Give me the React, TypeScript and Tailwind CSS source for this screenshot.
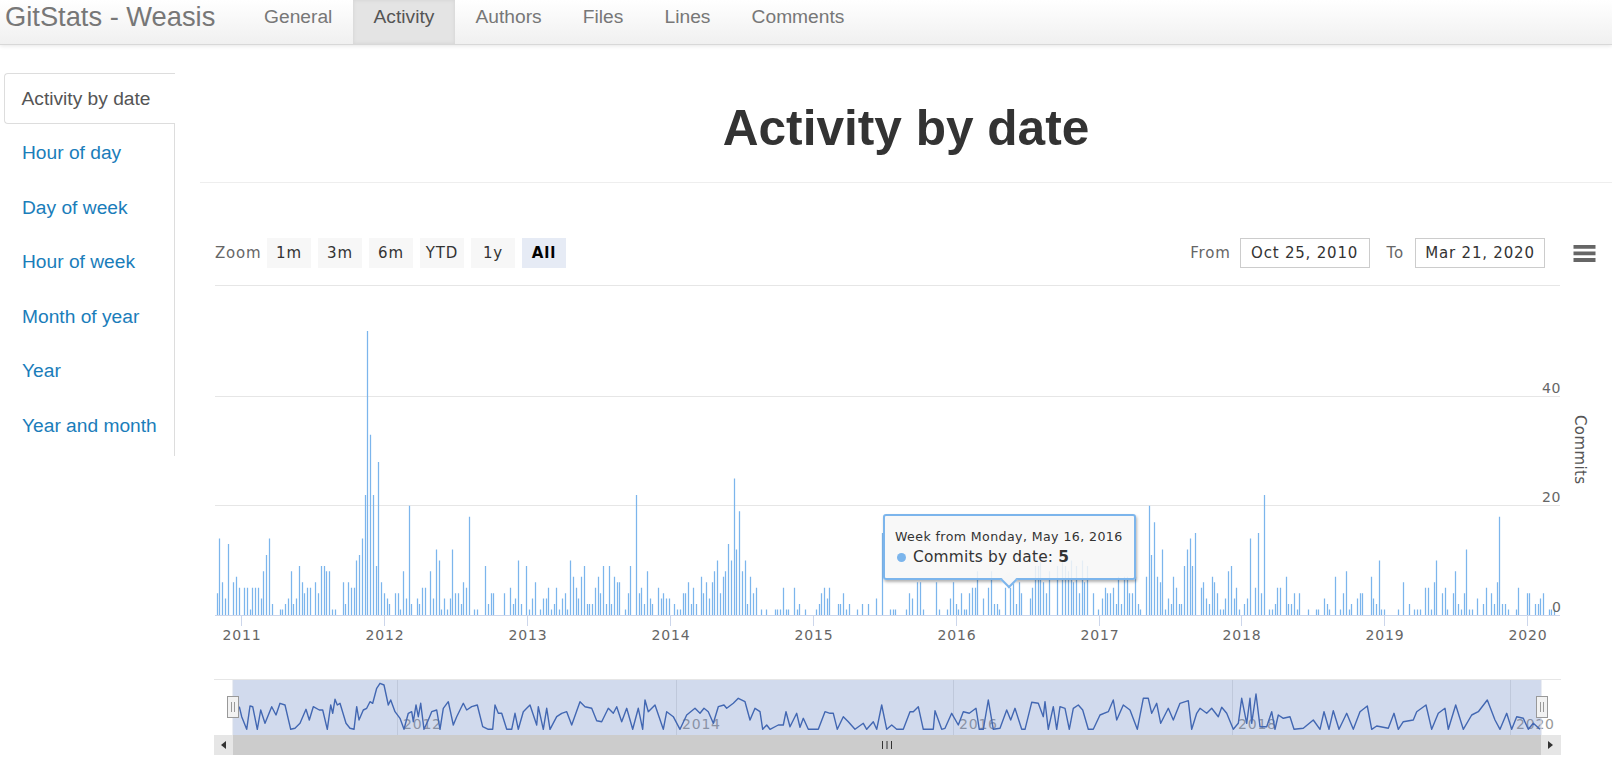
const sansFont = { fontFamily: '"DejaVu Sans", sans-serif' };

// weekly commit counts, read off in three runs so the x positions don't drift
const runs: { start: number; values: number[] }[] = [
  {
    start: 216.7,
    values: [
      4, 14, 6, 3, 13, 0, 6, 7, 5, 0, 5, 5, 1, 5, 5, 5, 3, 8, 11, 14, 2, 0, 0, 1, 1, 2, 3, 8, 2, 3, 9, 6, 4, 5, 5, 0, 6,
      4, 9, 9, 8, 8, 1, 1, 0, 0, 6, 2, 6, 5, 5, 10, 11, 14, 22, 52, 33, 22, 9, 28, 6, 4, 3, 2, 0, 4, 4, 1, 8, 3, 20, 2,
      0, 3, 2, 5, 5, 0, 8, 3, 12, 10, 1, 3, 1, 3, 12, 4, 4, 2, 6, 5, 18, 0, 1, 1, 0, 0, 9, 2, 4, 4, 0, 0, 0, 4, 0, 5, 2,
      3, 10, 2, 0, 9, 1, 3, 6, 0, 1, 3, 3, 5, 1, 2, 5, 1, 3, 4, 1, 10, 7, 5, 3, 7, 9, 2, 2, 2, 5, 7, 4, 9, 2, 9, 2, 7,
      6, 6, 0, 1, 4, 9, 0, 22, 4, 5, 2, 8, 3, 2, 0, 5, 3, 4, 3, 3, 0, 2, 1, 1, 4, 4, 6, 2, 5, 2,
    ],
  },
  {
    start: 700.7,
    values: [
      7, 4, 6, 3, 6, 8, 10, 4, 7, 8, 13, 10, 25, 12, 19, 8, 10, 2, 7, 4, 5, 0, 1, 0, 1, 0, 0, 1, 1, 1, 5, 1, 1, 0, 5, 1,
      2, 0, 1, 0, 0, 0, 1, 2, 4, 5, 3, 5, 0, 0, 2, 2, 4, 1, 2, 0, 0, 1, 0, 2, 0, 2, 0, 0, 3, 0, 15, 0, 0, 1, 1, 1, 0, 0,
      0, 1, 4, 3, 0, 6, 6, 1, 0, 0, 0, 0, 6, 1, 0, 0, 1, 3, 6, 2, 1, 4, 1, 1, 4, 5, 5, 8, 0, 3, 0, 5, 8, 2, 2, 1, 0, 5,
      0, 5, 6, 2, 6, 4, 0, 0, 3, 5, 9, 9, 10, 6, 4, 8, 0, 0, 9, 0, 10, 9, 8, 10, 6, 9, 4, 10, 6, 9, 0, 4, 0, 1,
    ],
  },
  {
    start: 1102,
    values: [
      3, 5, 4, 4, 5, 2, 7, 2, 7, 7, 4, 4, 7, 2, 1, 0, 7, 20, 11, 17, 7, 6, 12, 1, 3, 2, 7, 5, 2, 2, 9, 12, 14, 9, 15, 0,
      5, 6, 3, 2, 7, 6, 4, 1, 1, 3, 8, 9, 3, 5, 1, 0, 2, 3, 14, 0, 5, 15, 4, 22, 0, 1, 1, 2, 5, 5, 0, 7, 2, 2, 4, 1, 4,
      0, 0, 1, 0, 0, 1, 1, 0, 3, 2, 1, 0, 7, 0, 1, 4, 8, 1, 2, 0, 3, 4, 4, 0, 0, 7, 3, 2, 10, 1, 1, 0, 0, 0, 0, 1, 0, 6,
      0, 2, 0, 1, 1, 1, 0, 5, 5, 1, 6, 10, 0, 4, 5, 1, 0, 4, 8, 2, 1, 4, 12, 1, 1, 0, 3, 0, 2, 5, 0, 4, 2, 6, 18, 2, 2,
      1, 0, 0, 1, 5, 0, 0, 4, 4, 0, 2, 2, 3, 4, 0, 1, 1, 1,
    ],
  },
];

const bars = runs.flatMap((run) =>
  run.values.map((value, i) => ({ x: run.start + i * 2.74, value }))
);

const BASE_Y = 615;
const UNIT = 5.46;

const barsPath = bars
  .filter((b) => b.value > 0)
  .map((b) => `M${Math.round(b.x) + 0.5} ${BASE_Y}V${(BASE_Y - b.value * UNIT).toFixed(1)}`)
  .join("");

// navigator line, traced in 3x crops: [x, y] pairs per crop
const navTrace: { x0: number; pts: number[] }[] = [
  {
    x0: 200,
    pts: [
      118, 110, 125, 140, 140, 178, 150, 108, 158, 110, 172, 178, 182, 120, 195, 160, 215, 110, 228, 135, 240, 100, 255,
      105, 272, 178, 285, 175, 300, 160, 318, 118, 328, 150, 340, 110, 358, 120, 368, 120, 382, 178, 392, 105, 398, 130,
      405, 88, 412, 105, 420, 100, 438, 160, 450, 175, 462, 178, 470, 110, 477, 150, 490, 120, 500, 115, 510, 95, 518,
      100, 530, 55, 540, 40, 552, 45, 565, 105, 572, 90, 585, 125, 600, 145, 612, 178, 625, 130, 635, 125, 640, 155,
      648, 105, 655, 140, 662, 100, 672, 178, 685, 150, 695, 125, 710, 120, 720, 178, 730, 115, 745, 95, 760, 165, 770,
      140, 790, 100, 800, 120, 815, 110, 832, 105, 848, 170, 865, 178, 878, 178, 885, 105, 895, 130, 905, 130, 920, 178,
      935, 178, 945, 130, 955, 178, 970, 125, 980, 115, 990, 105, 1010, 165, 1015, 110, 1030, 178, 1040, 115, 1050, 178,
      1070, 140, 1085, 130, 1100, 125, 1115, 165, 1140, 95, 1155, 110, 1175, 115, 1190, 152, 1205, 155, 1225, 115, 1240,
      130, 1250, 110, 1265, 155, 1280, 115, 1298, 178, 1315, 115, 1328, 178, 1335, 90, 1345, 125, 1365, 105, 1390, 178,
      1400, 125, 1420, 140, 1440, 178, 1460, 135, 1485, 115,
    ],
  },
  {
    x0: 700,
    pts: [
      0, 130, 12, 115, 25, 125, 40, 160, 55, 110, 72, 105, 80, 115, 100, 100, 115, 85, 135, 95, 150, 150, 165, 115, 180,
      125, 188, 178, 200, 165, 210, 178, 235, 165, 250, 165, 258, 125, 270, 170, 290, 130, 300, 172, 310, 145, 325, 178,
      355, 178, 375, 125, 390, 130, 400, 130, 412, 178, 430, 140, 445, 155, 465, 178, 490, 160, 500, 178, 520, 155, 530,
      178, 545, 105, 560, 178, 575, 165, 590, 178, 610, 178, 630, 125, 640, 125, 655, 110, 670, 178, 700, 178, 705, 122,
      725, 178, 735, 175, 755, 130, 775, 165, 790, 125, 808, 130, 828, 115, 838, 178, 850, 178, 865, 90, 880, 178, 900,
      175, 920, 120, 932, 150, 945, 115, 965, 178, 975, 178, 995, 97, 1015, 100, 1030, 140, 1035, 95, 1045, 178, 1060,
      110, 1070, 178, 1080, 110, 1095, 115, 1108, 178, 1120, 115, 1135, 105, 1148, 120, 1165, 178, 1180, 178, 1200, 135,
      1225, 125, 1240, 90, 1250, 150, 1270, 105, 1290, 120, 1312, 178, 1330, 85, 1345, 85, 1355, 130, 1370, 100, 1382,
      160, 1405, 115, 1420, 150, 1440, 100, 1465, 92, 1475, 178, 1490, 130,
    ],
  },
  {
    x0: 1150,
    pts: [
      150, 115, 170, 130, 185, 115, 205, 140, 215, 112, 230, 130, 250, 178, 265, 160, 275, 85, 290, 160, 300, 85, 305,
      160, 318, 72, 330, 170, 350, 170, 365, 125, 375, 178, 385, 135, 400, 145, 420, 140, 432, 178, 460, 175, 490, 150,
      510, 178, 522, 125, 537, 178, 550, 122, 567, 178, 590, 130, 610, 178, 630, 125, 652, 108, 665, 178, 680, 168, 715,
      175, 732, 130, 745, 178, 760, 155, 790, 150, 800, 125, 828, 105, 845, 178, 865, 130, 885, 115, 895, 178, 917, 105,
      940, 178, 965, 135, 985, 125, 1012, 90, 1035, 150, 1050, 178, 1070, 130, 1085, 178, 1100, 140, 1120, 145, 1135,
      178, 1150, 160, 1170, 178,
    ],
  },
];

const navPoints = navTrace
  .flatMap(({ x0, pts }) =>
    pts
      .filter((_, i) => i % 2 === 0)
      .map((x, i) => `${(x0 + x / 3).toFixed(1)},${(670 + pts[i * 2 + 1] / 3).toFixed(1)}`)
  )
  .join(" ");

const years = [
  ["2011", 242],
  ["2012", 385],
  ["2013", 528],
  ["2014", 671],
  ["2015", 814],
  ["2016", 957],
  ["2017", 1100],
  ["2018", 1242],
  ["2019", 1385],
  ["2020", 1528],
] as const;

const navYears = [
  ["2012", 397],
  ["2014", 676],
  ["2016", 953],
  ["2018", 1232],
  ["2020", 1510],
] as const;

const navLinks = ["General", "Activity", "Authors", "Files", "Lines", "Comments"];
const sideLinks = ["Hour of day", "Day of week", "Hour of week", "Month of year", "Year", "Year and month"];
const zoomButtons = ["1m", "3m", "6m", "YTD", "1y", "All"];

function Navbar() {
  return (
    <nav className="flex h-[45px] items-stretch border-b border-[#d8d8d8] bg-gradient-to-b from-white to-[#f0f0f0] shadow-[0_1px_4px_rgba(0,0,0,0.1)]">
      <div className="w-[243.5px] pl-[5px] text-[27.3px] leading-[34px] text-[#777777]">GitStats - Weasis</div>
      {navLinks.map((link) => (
        <a
          key={link}
          href="#"
          className={
            link === "Activity"
              ? "bg-[#e4e4e4] px-[20.6px] text-[19.2px] leading-[34px] text-[#555555] shadow-[inset_0_0_4px_rgba(0,0,0,0.08)]"
              : "px-[20.6px] text-[19.2px] leading-[34px] text-[#777777]"
          }
        >
          {link}
        </a>
      ))}
    </nav>
  );
}

function Sidebar() {
  return (
    <aside className="w-[175px] shrink-0 pl-1 pt-[28px]">
      <div className="h-[51px] rounded-l border border-r-0 border-[#dddddd] pl-[16.5px] text-[19.2px] leading-[49px] text-[#555555]">
        Activity by date
      </div>
      <ul className="border-r border-[#dddddd] pb-[3px] pt-px">
        {sideLinks.map((link) => (
          <li key={link} className="h-[54.6px] pl-[18px] text-[19.2px] leading-[56px] text-[#1a7dba]">
            {link}
          </li>
        ))}
      </ul>
    </aside>
  );
}

function RangeSelector() {
  return (
    <div
      className="flex h-[30px] items-center pl-[40px] pr-[16px] text-[15px] tracking-[0.8px] text-[#666666]"
      style={sansFont}
    >
      <span className="mr-[6px] w-[46px]">Zoom</span>
      <div className="flex gap-[7px]">
        {zoomButtons.map((label) => (
          <button
            key={label}
            className={
              label === "All"
                ? "h-[30px] w-[44px] bg-[#e6ebf5] text-[15px] font-bold text-black"
                : "h-[30px] w-[44px] bg-[#f7f7f7] text-[15px] text-[#333333]"
            }
          >
            {label}
          </button>
        ))}
      </div>
      <span className="ml-auto mr-[9px]">From</span>
      <div className="flex h-[30px] w-[130px] items-center justify-center border border-[#cccccc] text-[#333333]">
        Oct 25, 2010
      </div>
      <span className="ml-[17px] mr-[11px]">To</span>
      <div className="flex h-[30px] w-[130px] items-center justify-center border border-[#cccccc] text-[#333333]">
        Mar 21, 2020
      </div>
      <svg className="ml-[28px]" width="23" height="18" viewBox="0 0 23 18">
        <path d="M0.5 2.8H22.5M0.5 9.4H22.5M0.5 16H22.5" stroke="#666666" strokeWidth="3.8" />
      </svg>
    </div>
  );
}

function Chart() {
  return (
    <svg width="1437" height="499" viewBox="175 270 1437 499" className="block" style={sansFont}>
      {/* plot grid */}
      <path d="M215 285.5H1560M215 396.5H1560M215 505.5H1560" stroke="#e6e6e6" />
      <path d={barsPath} stroke="#7cb5ec" strokeWidth="1.25" fill="none" />
      <path d="M215 615.5H1560" stroke="#ccd6eb" />
      {years.map(([label, x]) => (
        <g key={label}>
          <path d={`M${x - 0.5} 615V626`} stroke="#ccd6eb" />
          <text x={x} y={640} textAnchor="middle" fontSize="14" letterSpacing="0.8" fill="#666666">
            {label}
          </text>
        </g>
      ))}
      <text x={1561} y={393} textAnchor="end" fontSize="14" letterSpacing="0.6" fill="#666666">40</text>
      <text x={1561} y={502} textAnchor="end" fontSize="14" letterSpacing="0.6" fill="#666666">20</text>
      <text x={1561} y={612} textAnchor="end" fontSize="14" fill="#666666">0</text>
      <text x={0} y={0} transform="translate(1575 415) rotate(90)" fontSize="15" letterSpacing="0.4" fill="#555555">
        Commits
      </text>

      {/* navigator */}
      <path d="M214 679.5H1561" stroke="#e6e6e6" />
      {navYears.map(([label, x]) => (
        <g key={label}>
          <path d={`M${x + 0.5} 680V735`} stroke="#e6e6e6" />
          <text x={x + 6} y={729} fontSize="14" letterSpacing="0.8" fill="#999999">
            {label}
          </text>
        </g>
      ))}
      <rect x="233" y="680" width="1308" height="55" fill="#6685c2" fillOpacity="0.3" />
      <polyline points={navPoints} fill="none" stroke="#4267b2" strokeWidth="1.4" strokeLinejoin="round" />
      <path d="M233 680V735M1541 680V735" stroke="#d5dbe8" />

      {/* scrollbar */}
      <rect x="214" y="735" width="1347" height="20" fill="#cccccc" />
      <rect x="214" y="735" width="19" height="20" fill="#e6e6e6" />
      <rect x="1541" y="735" width="20" height="20" fill="#e6e6e6" />
      <path d="M221 745l5-4v8zM1553 745l-5-4v8z" fill="#333333" />
      <path d="M882.5 741V749M887 741V749M891.5 741V749" stroke="#333333" />
      {[227.5, 1536.5].map((x) => (
        <g key={x}>
          <rect x={x} y="696.5" width="11" height="21" fill="#f2f2f2" stroke="#999999" />
          <path d={`M${x + 4} 702V712M${x + 7} 702V712`} stroke="#999999" />
        </g>
      ))}
    </svg>
  );
}

function Tooltip() {
  return (
    <div className="absolute left-[708px] top-[469px]" style={sansFont}>
      <div className="h-[66px] w-[253px] rounded-[3px] border-2 border-[#7cb5ec] bg-[#f7f7f7]/85 pl-[10px] pt-[11px] text-[#333333] shadow-[1px_2px_3px_rgba(0,0,0,0.3)]">
        <div className="text-[12.6px] leading-[20px] tracking-[0.4px] whitespace-nowrap">
          Week from Monday, May 16, 2016
        </div>
        <div className="flex items-center text-[15.4px] leading-[20px] tracking-[0.2px] whitespace-nowrap">
          <span className="ml-[2px] mr-[7px] h-[9px] w-[9px] rounded-full bg-[#7cb5ec]" />
          Commits by date:&nbsp;<b>5</b>
        </div>
      </div>
      <div className="absolute left-[120px] top-[60px] h-[12px] w-[12px] rotate-45 border-b-2 border-r-2 border-[#7cb5ec] bg-[#f7f7f7]" />
    </div>
  );
}

export default function App() {
  return (
    <div className="h-[769px] overflow-hidden bg-white" style={{ fontFamily: '"Liberation Sans", Arial, sans-serif' }}>
      <Navbar />
      <div className="flex items-start">
        <Sidebar />
        <main className="relative min-w-0 flex-1">
          <div className="ml-[25px] h-[138px] border-b border-[#eeeeee] pt-[48px] text-center text-[49.6px] font-bold leading-[70px] text-[#333333]">
            Activity by date
          </div>
          <div className="mt-[55px]">
            <RangeSelector />
          </div>
          <div className="mt-[2px]">
            <Chart />
          </div>
          <Tooltip />
        </main>
      </div>
    </div>
  );
}
